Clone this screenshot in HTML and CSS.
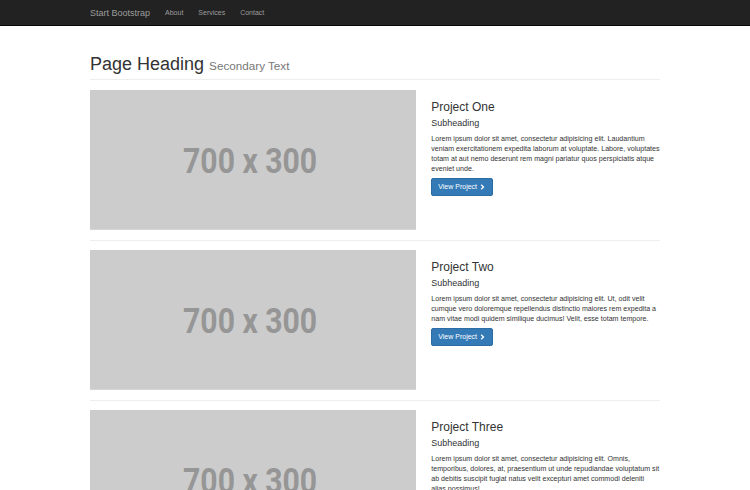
FILE: index.html
```html
<!DOCTYPE html>
<html lang="en">
<head>
<meta charset="utf-8">
<title>One Column Portfolio</title>
<link rel="stylesheet" href="styles.css">
</head>
<body>
<nav class="navbar">
  <div class="container nav-inner">
    <a class="brand" href="#">Start Bootstrap</a>
    <ul class="nav-links">
      <li><a href="#">About</a></li>
      <li><a href="#">Services</a></li>
      <li><a href="#">Contact</a></li>
    </ul>
  </div>
</nav>

<main class="container">
  <h1 class="page-header">Page Heading <small>Secondary Text</small></h1>

  <section class="project">
    <div class="project-img">
      <svg class="placeholder" viewBox="0 0 326 140" preserveAspectRatio="none"><rect width="326" height="140" fill="#cccccc"/><text x="160" y="83.5" text-anchor="middle" textLength="134" lengthAdjust="spacingAndGlyphs" class="ph-text">700 x 300</text></svg>
    </div>
    <div class="project-body">
      <h3>Project One</h3>
      <h4>Subheading</h4>
      <p>Lorem ipsum dolor sit amet, consectetur adipisicing elit. Laudantium veniam exercitationem expedita laborum at voluptate. Labore, voluptates totam at aut nemo deserunt rem magni pariatur quos perspiciatis atque eveniet unde.</p>
      <a class="btn" href="#">View Project <svg class="chev" viewBox="0 0 10 10"><path d="M2.6 0.6 L7.4 5 L2.6 9.4 L1.2 8 L4.4 5 L1.2 2 Z"/></svg></a>
    </div>
  </section>

  <hr class="sep">

  <section class="project">
    <div class="project-img">
      <svg class="placeholder" viewBox="0 0 326 140" preserveAspectRatio="none"><rect width="326" height="140" fill="#cccccc"/><text x="160" y="83.5" text-anchor="middle" textLength="134" lengthAdjust="spacingAndGlyphs" class="ph-text">700 x 300</text></svg>
    </div>
    <div class="project-body">
      <h3>Project Two</h3>
      <h4>Subheading</h4>
      <p>Lorem ipsum dolor sit amet, consectetur adipisicing elit. Ut, odit velit cumque vero doloremque repellendus distinctio maiores rem expedita a nam vitae modi quidem similique ducimus! Velit, esse totam tempore.</p>
      <a class="btn" href="#">View Project <svg class="chev" viewBox="0 0 10 10"><path d="M2.6 0.6 L7.4 5 L2.6 9.4 L1.2 8 L4.4 5 L1.2 2 Z"/></svg></a>
    </div>
  </section>

  <hr class="sep">

  <section class="project">
    <div class="project-img">
      <svg class="placeholder" viewBox="0 0 326 140" preserveAspectRatio="none"><rect width="326" height="140" fill="#cccccc"/><text x="160" y="83.5" text-anchor="middle" textLength="134" lengthAdjust="spacingAndGlyphs" class="ph-text">700 x 300</text></svg>
    </div>
    <div class="project-body">
      <h3>Project Three</h3>
      <h4>Subheading</h4>
      <p>Lorem ipsum dolor sit amet, consectetur adipisicing elit. Omnis, temporibus, dolores, at, praesentium ut unde repudiandae voluptatum sit ab debitis suscipit fugiat natus velit excepturi amet commodi deleniti alias possimus!</p>
      <a class="btn" href="#">View Project <svg class="chev" viewBox="0 0 10 10"><path d="M2.6 0.6 L7.4 5 L2.6 9.4 L1.2 8 L4.4 5 L1.2 2 Z"/></svg></a>
    </div>
  </section>

  <hr class="sep">
</main>
</body>
</html>
```

FILE: styles.css
```css
* { box-sizing: border-box; }

html, body { margin: 0; }

body {
  padding-top: 35px;
  font-family: "Liberation Sans", Arial, Helvetica, sans-serif;
  font-size: 7px;
  line-height: 10px;
  color: #333333;
  background: #ffffff;
}

a { text-decoration: none; }

.container {
  width: 585px;
  margin: 0 auto;
  padding: 0 7.5px;
}

/* Navbar */
.navbar {
  position: fixed;
  top: 0;
  left: 0;
  right: 0;
  height: 25.5px;
  background: #222222;
  border-bottom: 0.5px solid #080808;
  z-index: 10;
}

.nav-inner {
  display: flex;
  align-items: stretch;
}

.brand {
  margin-left: -7.5px;
  padding: 7.5px;
  font-size: 9px;
  line-height: 10px;
  color: #9d9d9d;
}

.nav-links {
  display: flex;
  list-style: none;
  margin: 0;
  padding: 0;
}

.nav-links a {
  display: block;
  padding: 7.5px;
  font-size: 7px;
  line-height: 10px;
  color: #9d9d9d;
}

/* Page header */
.page-header {
  margin: 20px 0 10px;
  padding-bottom: 4.5px;
  border-bottom: 0.5px solid #eeeeee;
  font-size: 18px;
  line-height: 1.1;
  font-weight: normal;
  color: #333333;
}

.page-header small {
  font-size: 65%;
  font-weight: normal;
  color: #777777;
}

/* Projects */
.project {
  display: flex;
  gap: 15px;
}

.project-img {
  width: 326.25px;
  flex: none;
}

.placeholder {
  display: block;
  width: 326.25px;
  height: 139.8px;
}

.ph-text {
  font-family: Roboto, "Liberation Sans", Arial, sans-serif;
  font-weight: bold;
  font-size: 35px;
  fill: #969696;
}

.project-body {
  flex: 1;
  min-width: 0;
}

.project-body h3 {
  margin: 10.5px 0 5px;
  font-size: 12px;
  line-height: 1.1;
  font-weight: normal;
  color: #333333;
}

.project-body h4 {
  margin: 5px 0 5px;
  font-size: 9px;
  line-height: 1.1;
  font-weight: normal;
  color: #333333;
}

.project-body p {
  margin: 0 0 3.5px;
  font-size: 7.1px;
  line-height: 10.2px;
}

.btn {
  display: inline-flex;
  align-items: center;
  gap: 3px;
  padding: 3px 6px;
  font-size: 7px;
  line-height: 10px;
  color: #ffffff;
  background: #337ab7;
  border: 0.5px solid #2e6da4;
  border-radius: 2px;
}

.chev {
  width: 6px;
  height: 6px;
  fill: #ffffff;
}

.sep {
  margin: 10px 0 9.2px;
  border: 0;
  border-top: 0.5px solid #eeeeee;
}
```
